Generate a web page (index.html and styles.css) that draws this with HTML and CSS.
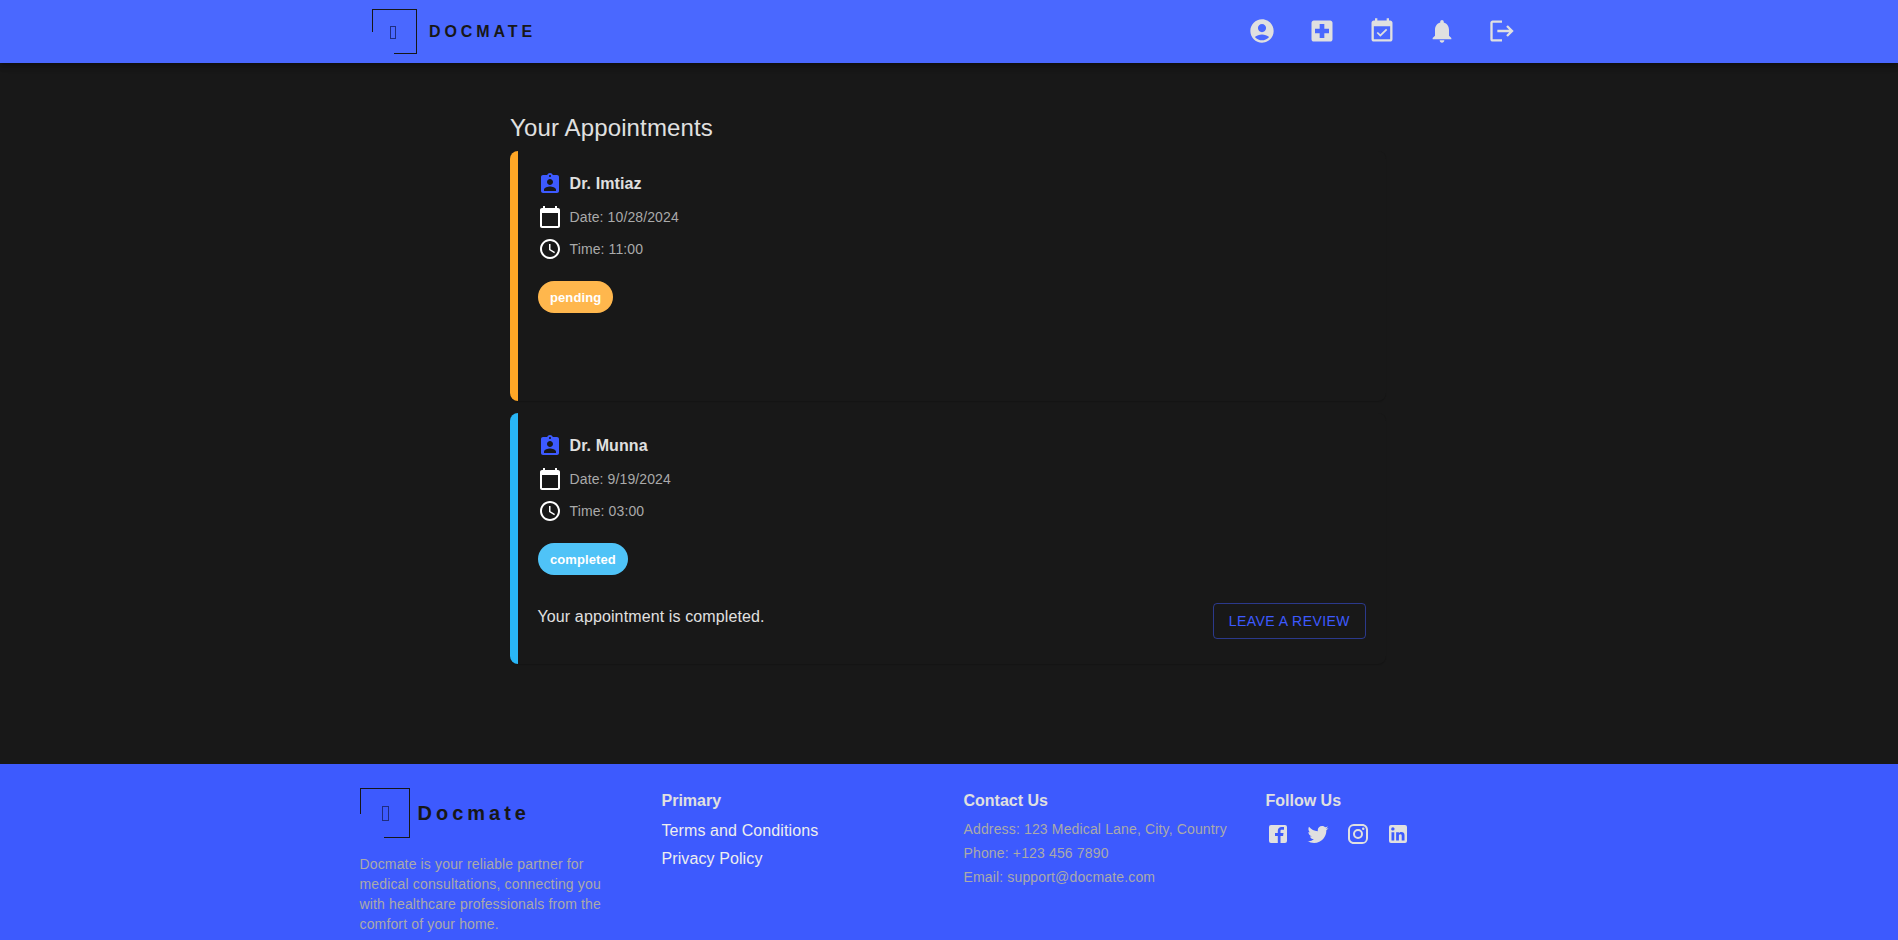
FILE: index.html
```html
<!DOCTYPE html>
<html lang="en">
<head>
<meta charset="utf-8">
<title>Docmate</title>
<link rel="stylesheet" href="styles.css">
</head>
<body>
<header class="nav">
  <div class="brand">
    <div class="logo"><span class="tofu"></span></div>
    <span class="brand-name">DOCMATE</span>
  </div>
  <nav class="nav-icons">
    <a class="nav-btn"><svg class="i28" viewBox="0 0 24 24"><path d="M12 2C6.48 2 2 6.48 2 12s4.48 10 10 10 10-4.48 10-10S17.52 2 12 2zm0 4c1.93 0 3.5 1.57 3.5 3.5S13.93 13 12 13s-3.5-1.57-3.5-3.5S10.07 6 12 6zm0 14c-2.03 0-4.43-.82-6.14-2.88C7.55 15.8 9.68 15 12 15s4.45.8 6.14 2.12C16.43 19.18 14.03 20 12 20z"/></svg></a>
    <a class="nav-btn"><svg class="i28" viewBox="0 0 24 24"><path d="M19 3H5c-1.1 0-1.99.9-1.99 2L3 19c0 1.1.9 2 2 2h14c1.1 0 2-.9 2-2V5c0-1.1-.9-2-2-2zm-1 11h-4v4h-4v-4H6v-4h4V6h4v4h4v4z"/></svg></a>
    <a class="nav-btn"><svg class="i28" viewBox="0 0 24 24"><path d="M16.53 11.06L15.47 10l-4.88 4.88-2.12-2.12-1.06 1.06L10.59 17l5.94-5.94zM19 3h-1V1h-2v2H8V1H6v2H5c-1.11 0-1.99.9-1.99 2L3 19c0 1.1.89 2 2 2h14c1.1 0 2-.9 2-2V5c0-1.1-.9-2-2-2zm0 16H5V8h14v11z"/></svg></a>
    <a class="nav-btn"><svg class="i28" viewBox="0 0 24 24"><path d="M12 22c1.1 0 2-.9 2-2h-4c0 1.1.89 2 2 2zm6-6v-5c0-3.07-1.64-5.64-4.5-6.32V4c0-.83-.67-1.5-1.5-1.5s-1.5.67-1.5 1.5v.68C7.63 5.36 6 7.92 6 11v5l-2 2v1h16v-1l-2-2z"/></svg></a>
    <a class="nav-btn"><svg class="i28" viewBox="0 0 24 24"><path d="M17 7l-1.41 1.41L18.17 11H8v2h10.17l-2.58 2.58L17 17l5-5zM4 5h8V3H4c-1.1 0-2 .9-2 2v14c0 1.1.9 2 2 2h8v-2H4V5z"/></svg></a>
  </nav>
</header>

<main class="main">
  <h1 class="title">Your Appointments</h1>

  <article class="card card-pending">
    <div class="row row-name">
      <svg class="i24 accent" viewBox="0 0 24 24"><path d="M19 3h-4.18C14.4 1.84 13.3 1 12 1c-1.3 0-2.4.84-2.82 2H5c-1.1 0-2 .9-2 2v14c0 1.1.9 2 2 2h14c1.1 0 2-.9 2-2V5c0-1.1-.9-2-2-2zm-7 0c.55 0 1 .45 1 1s-.45 1-1 1-1-.45-1-1 .45-1 1-1zm0 4c1.66 0 3 1.34 3 3s-1.34 3-3 3-3-1.34-3-3 1.34-3 3-3zm6 12H6v-1.4c0-2 4-3.1 6-3.1s6 1.1 6 3.1V19z"/></svg>
      <span class="doctor">Dr. Imtiaz</span>
    </div>
    <div class="row row-date">
      <svg class="i24 white" viewBox="0 0 24 24"><path d="M20 3h-1V1h-2v2H7V1H5v2H4c-1.1 0-2 .9-2 2v16c0 1.1.9 2 2 2h16c1.1 0 2-.9 2-2V5c0-1.1-.9-2-2-2zm0 18H4V8h16v13z"/></svg>
      <span class="meta">Date: 10/28/2024</span>
    </div>
    <div class="row row-time">
      <svg class="i24 white" viewBox="0 0 24 24"><path d="M11.99 2C6.47 2 2 6.48 2 12s4.47 10 9.99 10C17.52 22 22 17.52 22 12S17.52 2 11.99 2zM12 20c-4.42 0-8-3.58-8-8s3.58-8 8-8 8 3.58 8 8-3.58 8-8 8zm.5-13H11v6l5.25 3.15.75-1.23-4.5-2.67z"/></svg>
      <span class="meta">Time: 11:00</span>
    </div>
    <span class="chip chip-pending">pending</span>
  </article>

  <article class="card card-completed">
    <div class="row row-name">
      <svg class="i24 accent" viewBox="0 0 24 24"><path d="M19 3h-4.18C14.4 1.84 13.3 1 12 1c-1.3 0-2.4.84-2.82 2H5c-1.1 0-2 .9-2 2v14c0 1.1.9 2 2 2h14c1.1 0 2-.9 2-2V5c0-1.1-.9-2-2-2zm-7 0c.55 0 1 .45 1 1s-.45 1-1 1-1-.45-1-1 .45-1 1-1zm0 4c1.66 0 3 1.34 3 3s-1.34 3-3 3-3-1.34-3-3 1.34-3 3-3zm6 12H6v-1.4c0-2 4-3.1 6-3.1s6 1.1 6 3.1V19z"/></svg>
      <span class="doctor">Dr. Munna</span>
    </div>
    <div class="row row-date">
      <svg class="i24 white" viewBox="0 0 24 24"><path d="M20 3h-1V1h-2v2H7V1H5v2H4c-1.1 0-2 .9-2 2v16c0 1.1.9 2 2 2h16c1.1 0 2-.9 2-2V5c0-1.1-.9-2-2-2zm0 18H4V8h16v13z"/></svg>
      <span class="meta">Date: 9/19/2024</span>
    </div>
    <div class="row row-time">
      <svg class="i24 white" viewBox="0 0 24 24"><path d="M11.99 2C6.47 2 2 6.48 2 12s4.47 10 9.99 10C17.52 22 22 17.52 22 12S17.52 2 11.99 2zM12 20c-4.42 0-8-3.58-8-8s3.58-8 8-8 8 3.58 8 8-3.58 8-8 8zm.5-13H11v6l5.25 3.15.75-1.23-4.5-2.67z"/></svg>
      <span class="meta">Time: 03:00</span>
    </div>
    <span class="chip chip-completed">completed</span>
    <div class="card-foot">
      <p class="done">Your appointment is completed.</p>
      <button class="review" type="button">Leave a review</button>
    </div>
  </article>
</main>

<footer class="footer">
  <section class="col">
    <div class="foot-brand">
      <div class="logo logo-lg"><span class="tofu"></span></div>
      <span class="foot-name">Docmate</span>
    </div>
    <p class="about">Docmate is your reliable partner for medical consultations, connecting you with healthcare professionals from the comfort of your home.</p>
  </section>
  <section class="col">
    <h2 class="foot-title">Primary</h2>
    <a class="foot-link">Terms and Conditions</a>
    <a class="foot-link">Privacy Policy</a>
  </section>
  <section class="col">
    <h2 class="foot-title">Contact Us</h2>
    <p class="contact">Address: 123 Medical Lane, City, Country</p>
    <p class="contact">Phone: +123 456 7890</p>
    <p class="contact">Email: support@docmate.com</p>
  </section>
  <section class="col">
    <h2 class="foot-title">Follow Us</h2>
    <div class="social">
      <svg class="i24" viewBox="0 0 24 24"><path d="M5 3h14a2 2 0 0 1 2 2v14a2 2 0 0 1-2 2h-4.5v-7h2.6l.4-3h-3V9.1c0-.9.2-1.4 1.5-1.4H18V5.1c-.3 0-1.2-.1-2.3-.1-2.3 0-3.9 1.4-3.9 4v2H9v3h2.8v7H5a2 2 0 0 1-2-2V5a2 2 0 0 1 2-2z"/></svg>
      <svg class="i24" viewBox="0 0 24 24"><path d="M22.46 6c-.77.35-1.6.58-2.46.69.88-.53 1.56-1.37 1.88-2.38-.83.5-1.75.85-2.72 1.05C18.37 4.5 17.26 4 16 4c-2.35 0-4.27 1.92-4.27 4.29 0 .34.04.67.11.98C8.28 9.09 5.11 7.38 3 4.79c-.37.63-.58 1.37-.58 2.15 0 1.49.75 2.81 1.91 3.56-.71 0-1.37-.2-1.95-.5v.03c0 2.08 1.48 3.82 3.44 4.21a4.22 4.22 0 0 1-1.93.07 4.28 4.28 0 0 0 4 2.98 8.521 8.521 0 0 1-5.33 1.84c-.34 0-.68-.02-1.02-.06C3.44 20.29 5.7 21 8.12 21 16 21 20.33 14.46 20.33 8.79c0-.19 0-.37-.01-.56.84-.6 1.56-1.36 2.14-2.23z"/></svg>
      <svg class="i24" viewBox="0 0 24 24"><path d="M7.8 2h8.4C19.4 2 22 4.6 22 7.8v8.4a5.8 5.8 0 0 1-5.8 5.8H7.8C4.6 22 2 19.4 2 16.2V7.8A5.8 5.8 0 0 1 7.8 2m-.2 2A3.6 3.6 0 0 0 4 7.6v8.8C4 18.39 5.61 20 7.6 20h8.8a3.6 3.6 0 0 0 3.6-3.6V7.6C20 5.61 18.39 4 16.4 4H7.6m9.65 1.5a1.25 1.25 0 0 1 1.25 1.25A1.25 1.25 0 0 1 17.25 8 1.25 1.25 0 0 1 16 6.75a1.25 1.25 0 0 1 1.25-1.25M12 7a5 5 0 0 1 5 5 5 5 0 0 1-5 5 5 5 0 0 1-5-5 5 5 0 0 1 5-5m0 2a3 3 0 0 0-3 3 3 3 0 0 0 3 3 3 3 0 0 0 3-3 3 3 0 0 0-3-3z"/></svg>
      <svg class="i24" viewBox="0 0 24 24"><path d="M19 3a2 2 0 0 1 2 2v14a2 2 0 0 1-2 2H5a2 2 0 0 1-2-2V5a2 2 0 0 1 2-2h14m-.5 15.5v-5.3a3.26 3.26 0 0 0-3.26-3.26c-.85 0-1.84.52-2.32 1.3v-1.11h-2.79v8.37h2.79v-4.93c0-.77.62-1.4 1.39-1.4a1.4 1.4 0 0 1 1.4 1.4v4.93h2.79M6.88 8.56a1.68 1.68 0 0 0 1.68-1.68c0-.93-.75-1.69-1.68-1.69a1.69 1.69 0 0 0-1.69 1.69c0 .93.76 1.68 1.69 1.68m1.39 9.94v-8.37H5.5v8.37h2.77z"/></svg>
    </div>
  </section>
</footer>
</body>
</html>
```

FILE: styles.css
```css
* { box-sizing: border-box; }
html, body { margin: 0; padding: 0; }
body {
  background: #181818;
  font-family: "Liberation Sans", Arial, sans-serif;
  color: #e0e0e0;
  height: 940px;
  overflow: hidden;
}
svg { display: block; fill: currentColor; flex: none; }
.i24 { width: 24px; height: 24px; }
.i28 { width: 28px; height: 28px; }
.accent { color: #3d5afe; }
.white { color: #fff; }

.nav {
  height: 63px;
  background: #4a68ff;
  display: flex;
  align-items: center;
  justify-content: space-between;
  padding: 0 366px 0 372px;
  box-shadow: 0 2px 4px -1px rgba(0,0,0,.2), 0 4px 5px 0 rgba(0,0,0,.14), 0 1px 10px 0 rgba(0,0,0,.12);
  position: relative;
}
.brand { display: flex; align-items: center; gap: 12px; }
.logo {
  width: 45px;
  height: 45px;
  position: relative;
  display: flex;
  align-items: center;
  justify-content: center;
  padding-right: 2px;
  border-top: 1px solid #171717;
  border-right: 1px solid #171717;
}
.logo::before {
  content: "";
  position: absolute;
  left: 0;
  top: 0;
  width: 1px;
  height: 50%;
  background: #171717;
}
.logo::after {
  content: "";
  position: absolute;
  right: 0;
  bottom: 0;
  width: 50%;
  height: 1px;
  background: #171717;
}
.tofu {
  width: 6px;
  height: 13px;
  border: 1px solid #1f2d80;
}
.logo-lg { width: 50px; height: 50px; padding-right: 0; padding-left: 3px; }
.logo-lg .tofu { width: 7px; height: 15px; }
.brand-name {
  font-size: 16px;
  font-weight: 700;
  letter-spacing: 3.9px;
  color: #171717;
}
.nav-icons { display: flex; margin-top: -1px; }
.nav-btn {
  width: 60px;
  height: 60px;
  display: flex;
  align-items: center;
  justify-content: center;
  color: #e0e0e0;
}

.main {
  width: 878px;
  margin: 0 auto;
  padding: 51px 0 100px;
}
.title {
  margin: 0 0 9px;
  font-size: 24px;
  line-height: 28px;
  font-weight: 400;
  letter-spacing: .14px;
  color: #e0e0e0;
}
.card {
  width: 876px;
  min-height: 250px;
  background: #181818;
  border-left: 8px solid;
  border-radius: 8px;
  padding: 21px 20px 25px 20px;
  margin-bottom: 12px;
  box-shadow: 0 1px 1px rgba(0,0,0,.18);
}
.card:last-child { margin-bottom: 0; }
.card-pending { border-color: #ffa726; }
.card-completed { border-color: #29b6f6; }
.row { display: flex; align-items: center; gap: 8px; height: 24px; }
.row-name { margin-bottom: 9px; }
.row-date { margin-bottom: 8px; }
.row-time { margin-bottom: 20px; }
.doctor { font-size: 16px; font-weight: 700; letter-spacing: .1px; margin-left: -.5px; color: #e0e0e0; }
.meta { font-size: 14px; letter-spacing: .12px; margin-left: -.5px; color: #aaa; }
.chip {
  display: inline-flex;
  align-items: center;
  height: 32px;
  padding: 0 12px;
  border-radius: 16px;
  font-size: 13px;
  font-weight: 700;
  letter-spacing: .1px;
  color: #fff;
}
.chip-pending { background: #ffb74d; }
.chip-completed { background: #4fc3f7; }
.card-foot {
  display: flex;
  align-items: flex-start;
  justify-content: space-between;
  margin-top: 28px;
}
.done {
  margin: 2px 0 0 -.5px;
  font-size: 16px;
  line-height: 24px;
  letter-spacing: .12px;
  color: #e0e0e0;
}
.review {
  height: 36px;
  padding: 0 15px;
  border: 1px solid rgba(61,90,254,.5);
  border-radius: 4px;
  background: transparent;
  color: #3d5afe;
  font-family: inherit;
  font-size: 14px;
  font-weight: 500;
  letter-spacing: .45px;
  text-transform: uppercase;
}

.footer {
  height: 177px;
  background: #3d5afe;
  padding: 24px 0 0 359.5px;
  display: grid;
  grid-template-columns: repeat(4, 302px);
}
.foot-brand { display: flex; align-items: center; gap: 8px; margin-bottom: 16px; }
.foot-name {
  font-size: 20px;
  font-weight: 700;
  letter-spacing: 4px;
  color: #171717;
}
.about {
  margin: 0;
  width: 245px;
  font-size: 14px;
  line-height: 20px;
  letter-spacing: .15px;
  color: #aaa;
}
.foot-title {
  margin: 4px 0 7px;
  font-size: 16px;
  line-height: 18px;
  font-weight: 700;
  color: #e0e0e0;
}
.foot-link {
  display: block;
  font-size: 16px;
  line-height: 28px;
  letter-spacing: .1px;
  color: #eee;
}
.contact {
  margin: 0;
  font-size: 14px;
  line-height: 24px;
  letter-spacing: .15px;
  color: #aaa;
}
.social { display: flex; gap: 16px; margin-top: 12px; color: #e0e0e0; }
```
